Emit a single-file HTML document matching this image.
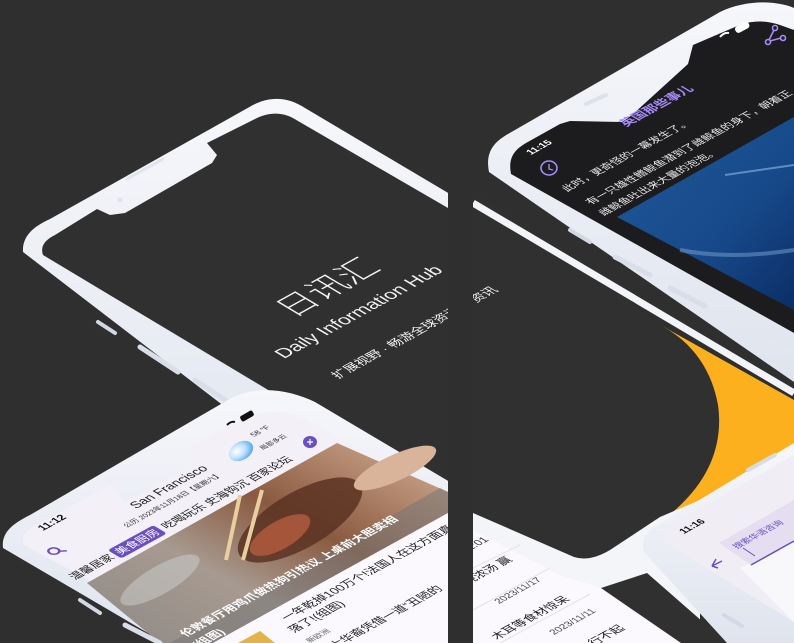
<!DOCTYPE html>
<html><head><meta charset="utf-8"><style>
html,body{margin:0;padding:0;background:#2f2f2f;}
svg{display:block}
text{font-family:"Liberation Sans","Noto Sans CJK SC",sans-serif;}
</style></head><body>
<svg width="794" height="643" viewBox="0 0 794 643" xmlns="http://www.w3.org/2000/svg">
<defs>
<clipPath id="L"><rect x="0" y="0" width="448" height="643"/></clipPath>
<clipPath id="R"><rect x="473" y="0" width="321" height="643"/></clipPath>
<linearGradient id="photo" x1="0" y1="1" x2="1" y2="0">
<stop offset="0" stop-color="#8d8986"/><stop offset="0.35" stop-color="#a79a90"/><stop offset="0.6" stop-color="#8a5a40"/><stop offset="1" stop-color="#d8b49a"/></linearGradient>
<linearGradient id="whale" x1="0" y1="0" x2="1" y2="1">
<stop offset="0" stop-color="#1f5a9a"/><stop offset="0.6" stop-color="#17498a"/><stop offset="1" stop-color="#0b2e66"/></linearGradient>
<linearGradient id="side" x1="0" y1="0" x2="0" y2="1">
<stop offset="0" stop-color="#f6f7fb"/><stop offset="1" stop-color="#dfe4ee"/></linearGradient>
<radialGradient id="wx" cx="0.35" cy="0.4" r="0.7"><stop offset="0" stop-color="#ffffff"/><stop offset="0.5" stop-color="#bfe1fb"/><stop offset="1" stop-color="#4aa3ee"/></radialGradient>
</defs>

<!-- LEFT HALF -->
<g clip-path="url(#L)">
<path d="M23,252 C22,235 35,226 50,219 L253,105 C272,95 290,98 305,108 L460,200 L460,520 L300,470 L233,413 Z" fill="url(#side)"/>
<path d="M43,255 C40,246 45,240 55,235 L97,209 L110,215 L125,213 L212,163 L217,155 L207,143 L255,119 C270,111 285,112 298,121 L460,215 L460,505 Z" fill="#303030"/>
<path d="M127,179 L163,159" stroke="#e0e4ec" stroke-width="3" stroke-linecap="round"/>
<circle cx="120" cy="200" r="2.5" fill="#e0e4ec"/>
<text transform="matrix(0.876,-0.482,0.857,0.514,293,318)" font-size="34" fill="#f2f2f2" font-weight="300">日讯汇</text>
<text transform="matrix(0.876,-0.482,0.857,0.514,284,359)" font-size="19" fill="#f2f2f2">Daily Information Hub</text>
<text transform="matrix(0.876,-0.482,0.857,0.514,338,379)" font-size="13" fill="#f2f2f2">扩展视野 · 畅游全球资讯</text>
<path d="M98,322 L115,333" stroke="#d3d9e4" stroke-width="4" stroke-linecap="round"/>
<path d="M140,347 L178,372" stroke="#d9dee8" stroke-width="5" stroke-linecap="round"/>
<path d="M195,380 L228,402" stroke="#d9dee8" stroke-width="5" stroke-linecap="round"/>

<path d="M3,548 C1,532 14,523 30,515 L233,397 C260,385 290,390 315,402 L460,488 L460,643 L165,643 Z" fill="url(#side)"/>
<path d="M24,545 C20,536 26,530 40,523 L112,484 L124,503 L196,463 L190,446 L240,420 C265,408 290,410 310,421 L460,508 L460,643 L205,643 Z" fill="#f3f0f7"/>
<path d="M87,583 L337,443 L448,492 L448,513 L213,643 L160,643 Z" fill="url(#photo)"/>
<ellipse cx="300" cy="520" rx="70" ry="28" transform="rotate(-30 300 520)" fill="#5b3322" opacity="0.85"/>
<ellipse cx="280" cy="535" rx="34" ry="14" transform="rotate(-30 280 535)" fill="#a4553a"/>
<ellipse cx="395" cy="468" rx="45" ry="13" transform="rotate(-25 395 468)" fill="#d9b39a"/>
<path d="M226,560 L240,495 M243,560 L262,490" stroke="#e9cf9f" stroke-width="4"/>
<ellipse cx="160" cy="580" rx="45" ry="14" transform="rotate(-30 160 580)" fill="#c7c6c4" opacity="0.6"/>
<path d="M170,643 L440,488 L448,492 L448,513 L213,643 Z" fill="#777" opacity="0.55"/>
<text transform="matrix(0.876,-0.482,0.857,0.514,186,637)" font-size="12" fill="#fff" font-weight="bold">伦敦餐厅用鸡爪做热狗引热议 上桌前大胆卖相</text>
<text transform="matrix(0.876,-0.482,0.857,0.514,198,648)" font-size="12" fill="#fff" font-weight="bold">(组图)</text>
<path d="M213,643 L448,513 L460,513 L460,643 Z" fill="#fbf9fd"/>
<path d="M238,643 L260,631 L275,643 Z" fill="#e2b34a"/>
<text transform="matrix(0.876,-0.482,0.857,0.514,287,621)" font-size="12" fill="#222">一年乾掉100万个!法国人在这方面真的</text>
<text transform="matrix(0.876,-0.482,0.857,0.514,294,633)" font-size="12" fill="#222">落了!(组图)</text>
<text transform="matrix(0.876,-0.482,0.857,0.514,310,643)" font-size="8" fill="#666">新欧洲</text>
<text transform="matrix(0.876,-0.482,0.857,0.514,335,649)" font-size="12" fill="#222">大华裔凭借一道“丑陋的</text>
<text transform="matrix(0.876,-0.482,0.857,0.514,43,531)" font-size="11" fill="#111" font-weight="bold">11:12</text>
<text transform="matrix(0.876,-0.482,0.857,0.514,136,509)" font-size="13" fill="#222">San Francisco</text>
<text transform="matrix(0.876,-0.482,0.857,0.514,127,528)" font-size="7.5" fill="#333">公历 2023年11月18日【星期六】</text>
<g transform="matrix(0.876,-0.482,0.857,0.514,52,556)">
<circle cx="6" cy="-4" r="4.5" fill="none" stroke="#6a4fbf" stroke-width="2"/><path d="M9,-1 L14,3" stroke="#6a4fbf" stroke-width="2"/>
</g>
<g transform="matrix(0.876,-0.482,0.857,0.514,75,580)">
<text x="0" y="0" font-size="11.5" fill="#222">温馨居家</text>
<rect x="49" y="-12" width="52" height="16" rx="3" fill="#6b50bb"/>
<text x="52" y="0" font-size="11.5" fill="#fff">美食厨房</text>
<text x="105" y="0" font-size="11.5" fill="#222">吃喝玩乐 史海钩沉 百家论坛</text>
</g>
<ellipse cx="241" cy="451" rx="13" ry="9" transform="rotate(-30 241 451)" fill="url(#wx)"/>
<text transform="matrix(0.876,-0.482,0.857,0.514,254,437)" font-size="8" fill="#333">58 °F</text>
<text transform="matrix(0.876,-0.482,0.857,0.514,263,450)" font-size="7" fill="#333">局部多云</text>
<ellipse cx="310" cy="442" rx="7" ry="6" fill="#6a4fbf"/>
<path d="M307,442 L313,442 M310,439 L310,445" stroke="#fff" stroke-width="1.2"/>
<path d="M227,425 q4,-4 8,-3" stroke="#111" stroke-width="2" fill="none"/>
<rect x="240" y="413" width="14" height="6" rx="2" fill="#111" transform="rotate(-30 247 416)"/>
<path d="M80,600 L100,613" stroke="#d3d9e4" stroke-width="4" stroke-linecap="round"/>
<path d="M125,625 L160,643" stroke="#d9dee8" stroke-width="5" stroke-linecap="round"/>
</g>

<!-- RIGHT HALF -->
<g clip-path="url(#R)">
<path d="M664,327 L794,400 L794,450 L640,540 Z" fill="#fdb01e"/>
<path d="M473,190 L664,327 C695,345 712,372 718,405 C725,455 700,500 640,535 L600,560 L473,560 Z" fill="#303030"/>
<path d="M473,203 L794,393" stroke="#f2f4f8" stroke-width="7"/>
<text transform="matrix(0.876,-0.482,0.857,0.514,476,303)" font-size="13" fill="#f2f2f2">资讯</text>

<!-- top-right phone -->
<path d="M489,172 C485,152 494,142 508,134 L720,12 C745,0 775,0 794,8 L794,382 Z" fill="url(#side)"/>
<path d="M511,174 C508,158 514,150 526,143 L560,124 L570,121 L622,122 L632,115 L688,64 L693,45 L735,27 C750,20 765,20 780,25 L794,30 L794,333 Z" fill="#1c1c1e"/>
<path d="M617,217 L794,117 L794,310 Z" fill="url(#whale)"/>
<path d="M725,175 L794,165" stroke="#5f8cc4" stroke-width="2"/>
<path d="M680,250 Q730,260 794,250" stroke="#7aa2d0" stroke-width="4" fill="none" opacity="0.5"/>
<path d="M586,104 L606,95" stroke="#dde2ea" stroke-width="4" stroke-linecap="round"/>
<path d="M570,230 L590,242" stroke="#d3d9e4" stroke-width="4" stroke-linecap="round"/>
<path d="M615,257 L650,275" stroke="#d9dee8" stroke-width="5" stroke-linecap="round"/>
<path d="M670,288 L705,306" stroke="#d9dee8" stroke-width="5" stroke-linecap="round"/>
<path d="M752,333 L790,352" stroke="#e3e7ee" stroke-width="5" stroke-linecap="round"/>
<text transform="matrix(0.876,-0.482,0.857,0.514,531,155)" font-size="10" fill="#fff" font-weight="bold">11:15</text>
<ellipse cx="549" cy="168" rx="8" ry="7" fill="none" stroke="#a78bfa" stroke-width="1.6"/>
<path d="M549,164 L549,169 L553,170" stroke="#a78bfa" stroke-width="1.4" fill="none"/>
<text transform="matrix(0.876,-0.482,0.857,0.514,626,127)" font-size="13" fill="#a78bfa" font-weight="bold">英国那些事儿</text>
<text transform="matrix(0.876,-0.482,0.857,0.514,567,192)" font-size="11" fill="#e8e8e8">此时，更奇怪的一幕发生了。</text>
<text transform="matrix(0.876,-0.482,0.857,0.514,591,205)" font-size="11" fill="#e8e8e8">有一只雄性鳍鲸鱼潜到了雌鲸鱼的身下，朝着正</text>
<text transform="matrix(0.876,-0.482,0.857,0.514,604,216)" font-size="11" fill="#e8e8e8">雌鲸鱼吐出来大量的泡泡。</text>
<path d="M720,37 q4,-5 9,-4" stroke="#fff" stroke-width="2" fill="none"/>
<rect x="735" y="24" width="15" height="7" rx="3" fill="#fff" transform="rotate(-28 742 28)"/>
<g stroke="#a78bfa" stroke-width="1.6" fill="none"><circle cx="768" cy="42" r="2.5"/><circle cx="783" cy="38" r="2.5"/><circle cx="775" cy="28" r="2.5"/><path d="M770,41 L781,38 M769,40 L774,30"/></g>

<!-- bottom white center phone bezel + list -->
<path d="M473,513 L574,557 Q590,562 610,550 L660,517 L700,500 L700,643 L473,643 Z" fill="#f3f5f9"/>
<path d="M473,530 L560,575 L601,588 L681,643 L473,643 Z" fill="#fbf9fd"/>
<path d="M601,588 L647,573 L727,643 L681,643 Z" fill="#303030"/>
<g stroke="#e4e1ea" stroke-width="1"><path d="M473,568 L520,545"/><path d="M473,610 L550,568"/><path d="M500,643 L590,594"/></g>
<text transform="matrix(0.876,-0.482,0.857,0.514,466,553)" font-size="11" fill="#333">11:01</text>
<text transform="matrix(0.876,-0.482,0.857,0.514,468,585)" font-size="12" fill="#222">浇浓汤 赢</text>
<text transform="matrix(0.876,-0.482,0.857,0.514,499,604)" font-size="10" fill="#444">2023/11/17</text>
<text transform="matrix(0.876,-0.482,0.857,0.514,497,640)" font-size="12" fill="#222">木耳等食材惊呆</text>
<text transform="matrix(0.876,-0.482,0.857,0.514,554,635)" font-size="10" fill="#444">2023/11/11</text>
<text transform="matrix(0.876,-0.482,0.857,0.514,594,646)" font-size="12" fill="#222">行不起</text>

<!-- bottom-right phone -->
<path d="M644,552 C640,538 648,530 661,523 L794,443 L794,643 L727,643 Z" fill="url(#side)"/>
<path d="M664,542 C661,533 667,527 678,521 L794,455 L794,622 Z" fill="#f0edf5"/>
<path d="M740,568 L794,540 L794,622 Z" fill="#f8f7fa"/>
<path d="M719,543 L794,500 L794,540 L751,565 Z" fill="#e4def0"/>
<path d="M751,565 L794,541" stroke="#6a4fbf" stroke-width="1.5"/>
<path d="M743,548 L755,556" stroke="#6a4fbf" stroke-width="1"/>
<text transform="matrix(0.876,-0.482,0.857,0.514,737,549)" font-size="9" fill="#6a4fbf">搜索华语咨询</text>
<text transform="matrix(0.876,-0.482,0.857,0.514,684,534)" font-size="10" fill="#111" font-weight="bold">11:16</text>
<path d="M712,566 L722,561 M712,566 L716,559 M712,566 L718,568" stroke="#6a4fbf" stroke-width="1.5" fill="none"/>
<path d="M748,470 L775,455" stroke="#d6dbe5" stroke-width="4" stroke-linecap="round"/>
<path d="M724,615 L742,626" stroke="#d3d9e4" stroke-width="4" stroke-linecap="round"/>
</g>
</svg>
</body></html>
